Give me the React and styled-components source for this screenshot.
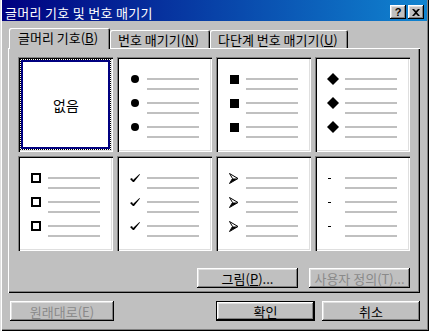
import React from 'react';
import styled, { createGlobalStyle } from 'styled-components';

const GlobalStyle = createGlobalStyle`
  html, body {
    margin: 0;
    padding: 0;
    background: #c0c0c0;
  }
  body {
    font-family: "Noto Sans CJK KR", "Liberation Sans", sans-serif;
    font-size: 13px;
    color: #000;
  }
`;

const Window = styled.div`
  width: 429px;
  height: 331px;
  box-sizing: border-box;
  background: #c0c0c0;
  display: flex;
  flex-direction: column;
  padding: 0 2px 2px 2px;
  box-shadow: inset 1px 0 #dfdfdf, inset 2px 0 #fff, inset -1px -1px #000,
    inset -2px -2px #808080;
`;

const TitleBar = styled.div`
  height: 21px;
  box-sizing: border-box;
  padding: 3px 3px 0 3px;
  display: flex;
  align-items: center;
  justify-content: space-between;
  background: linear-gradient(to right, #000080, #1084d0);
  color: #fff;
`;

const TitleText = styled.span`
  font-size: 13px;
  line-height: 15px;
  letter-spacing: 0.3px;
`;

const TitleButtons = styled.div`
  display: flex;
  gap: 2px;
`;

const TitleButton = styled.div`
  width: 16px;
  height: 14px;
  box-sizing: border-box;
  background: #c0c0c0;
  display: flex;
  align-items: center;
  justify-content: center;
  color: #000;
  font-family: "Liberation Sans", sans-serif;
  font-weight: bold;
  font-size: 11px;
  line-height: 1;
  box-shadow: inset -1px -1px #000, inset 1px 1px #fff, inset -2px -2px #808080,
    inset 2px 2px #dfdfdf;
`;

const Body = styled.div`
  flex: 1;
  display: flex;
  flex-direction: column;
  padding: 7px 7px 0 6px;
`;

const TabRow = styled.div`
  display: flex;
  align-items: flex-end;
  height: 20px;
  padding-left: 1px;
`;

const Tab = styled.div`
  position: relative;
  z-index: 1;
  width: ${(p) => p.$width}px;
  height: ${(p) => (p.$selected ? 21 : 18)}px;
  margin-bottom: ${(p) => (p.$selected ? -1 : 0)}px;
  box-sizing: border-box;
  padding: ${(p) => (p.$selected ? '0 0 2px 9px' : '0 0 0 8px')};
  display: flex;
  align-items: center;
  background: #c0c0c0;
  border-radius: 2px 2px 0 0;
  white-space: nowrap;
  box-shadow: inset 1px 1px #fff, inset -1px 0 #000, inset -2px 0 #808080;
`;

const Panel = styled.div`
  height: 245px;
  box-sizing: border-box;
  padding: 9px 10px 0 10px;
  display: flex;
  flex-direction: column;
  box-shadow: inset 1px 1px #fff, inset -1px -1px #000, inset -2px -2px #808080;
`;

const Grid = styled.div`
  display: grid;
  grid-template-columns: repeat(4, 95px);
  grid-auto-rows: 95px;
  column-gap: 4px;
  row-gap: 4px;
`;

const Cell = styled.div`
  background: #fff;
  box-sizing: border-box;
  padding: 2px;
  display: flex;
  box-shadow: inset 1px 1px #808080, inset 2px 2px #000, inset -1px -1px #fff,
    inset -2px -2px #dfdfdf;
`;

const FocusFrame = styled.div`
  flex: 1;
  border: 1px dotted #000;
  display: flex;
`;

const NoneBox = styled.div`
  flex: 1;
  border: 2px solid #000080;
  display: flex;
  align-items: center;
  justify-content: center;
  font-size: 14px;
  padding-left: 1px;
`;

const BulletList = styled.div`
  flex: 1;
  display: flex;
  flex-direction: column;
  padding-top: 14px;
`;

const BulletRow = styled.div`
  height: 24px;
  display: flex;
`;

const Marker = styled.div`
  width: 12px;
  height: 12px;
  margin-left: 10px;
  display: flex;
  align-items: center;
  justify-content: ${(p) => p.$align || 'center'};
`;

const Lines = styled.div`
  margin-left: 6px;
  padding-top: 5px;
  display: flex;
  flex-direction: column;
  gap: 8px;
`;

const Line = styled.div`
  width: 52px;
  height: 2px;
  background: #c0c0c0;
`;

const Disc = styled.div`
  width: 8px;
  height: 8px;
  border-radius: 50%;
  background: #000;
`;

const Square = styled.div`
  width: 9px;
  height: 9px;
  background: #000;
`;

const HollowBox = styled.div`
  width: 10px;
  height: 10px;
  box-sizing: border-box;
  border: 2px solid #000;
`;

const Dash = styled.div`
  width: 3px;
  height: 1px;
  margin-left: 1px;
  background: #000;
`;

const PanelButtons = styled.div`
  margin-top: 17px;
  display: flex;
  justify-content: flex-end;
  gap: 11px;
`;

const Button = styled.button`
  width: ${(p) => p.$width}px;
  height: 20px;
  box-sizing: border-box;
  padding: 0;
  margin: 0;
  font-family: inherit;
  font-size: 13px;
  background: #c0c0c0;
  border: ${(p) => (p.$default ? '1px solid #000' : 'none')};
  color: ${(p) => (p.disabled ? '#8a8a8a' : '#000')};
  box-shadow: inset -1px -1px #000, inset 1px 1px #fff, inset -2px -2px #808080,
    inset 2px 2px #dfdfdf;
  display: flex;
  align-items: center;
  justify-content: center;
  white-space: nowrap;
`;

const BottomRow = styled.div`
  margin-top: 8px;
  display: flex;
  padding-left: 2px;
`;

const Spacer = styled.div`
  flex: 1;
`;

const RightButtons = styled.div`
  display: flex;
  gap: 7px;
`;

const Diamond = () => (
  <svg width="12" height="12" viewBox="0 0 12 12">
    <polygon points="6,0 12,6 6,12 0,6" fill="#000" />
  </svg>
);

const Check = () => (
  <svg width="10" height="9" viewBox="0 0 10 9">
    <path d="M0 5 L2 4 L3 6 L9.5 0 L10 0.5 L4 8 L3 8 Z" fill="#000" />
  </svg>
);

const Arrow = () => (
  <svg width="10" height="11" viewBox="0 0 10 11">
    <path d="M0.5 0.5 L9 5.5 L0.5 10.5 L3.5 5.5 Z" fill="none" stroke="#000" strokeWidth="1" />
    <path d="M3.5 5.5 L9 5.5 L1 10 Z" fill="#000" />
  </svg>
);

const markers = {
  disc: <Disc />,
  square: <Square />,
  diamond: <Diamond />,
  box: <HollowBox />,
  check: <Check />,
  arrow: <Arrow />,
  dash: <Dash />,
};

const BulletCell = ({ kind }) => (
  <Cell>
    <BulletList>
      {[0, 1, 2].map((i) => (
        <BulletRow key={i}>
          <Marker $align={kind === 'dash' ? 'flex-start' : 'center'}>{markers[kind]}</Marker>
          <Lines>
            <Line />
            <Line />
          </Lines>
        </BulletRow>
      ))}
    </BulletList>
  </Cell>
);

export default function App() {
  return (
    <>
      <GlobalStyle />
      <Window>
        <TitleBar>
          <TitleText>글머리 기호 및 번호 매기기</TitleText>
          <TitleButtons>
            <TitleButton>?</TitleButton>
            <TitleButton>
              <svg width="8" height="7" viewBox="0 0 8 7">
                <path d="M0 0 L2 0 L4 2 L6 0 L8 0 L5 3.5 L8 7 L6 7 L4 5 L2 7 L0 7 L3 3.5 Z" fill="#000" />
              </svg>
            </TitleButton>
          </TitleButtons>
        </TitleBar>
        <Body>
          <TabRow>
            <Tab $selected $width={101}>
              글머리 기호(<u>B</u>)
            </Tab>
            <Tab $width={100}>
              번호 매기기(<u>N</u>)
            </Tab>
            <Tab $width={138}>
              다단계 번호 매기기(<u>U</u>)
            </Tab>
          </TabRow>
          <Panel>
            <Grid>
              <Cell>
                <FocusFrame>
                  <NoneBox>없음</NoneBox>
                </FocusFrame>
              </Cell>
              <BulletCell kind="disc" />
              <BulletCell kind="square" />
              <BulletCell kind="diamond" />
              <BulletCell kind="box" />
              <BulletCell kind="check" />
              <BulletCell kind="arrow" />
              <BulletCell kind="dash" />
            </Grid>
            <PanelButtons>
              <Button $width={101}>
                그림(<u>P</u>)...
              </Button>
              <Button $width={101} disabled>
                사용자 정의(T)...
              </Button>
            </PanelButtons>
          </Panel>
          <BottomRow>
            <Button $width={104} disabled>
              원래대로(E)
            </Button>
            <Spacer />
            <RightButtons>
              <Button $width={99} $default>
                확인
              </Button>
              <Button $width={98}>취소</Button>
            </RightButtons>
          </BottomRow>
        </Body>
      </Window>
    </>
  );
}
